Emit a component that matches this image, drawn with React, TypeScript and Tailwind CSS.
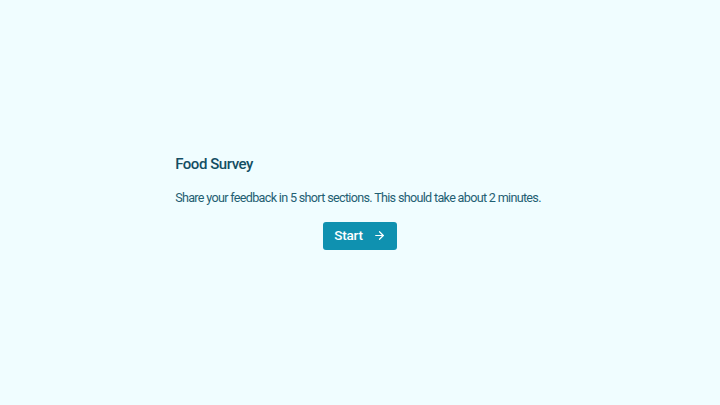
import React from 'react';
import { ArrowRight } from 'lucide-react';

export default function App() {
  return (
    <div
      className="w-full h-[405px] bg-[#f0fdff] flex items-center justify-center"
      style={{ fontFamily: 'Roboto, "Noto Sans", sans-serif' }}
    >
      <div className="flex flex-col pb-[2px]">
        <h1 className="text-[15px] font-medium text-[#134e63] leading-5 tracking-[-0.45px]">Food Survey</h1>
        <p className="mt-[14px] pr-[4px] text-[12.6px] text-[#1f5f73] leading-5 tracking-[-0.68px]">
          Share your feedback in 5 short sections. This should take about 2 minutes.
        </p>
        <div className="mt-[14px] flex justify-center">
          <button className="h-[28px] px-[11px] rounded-[3px] bg-[#0f91b0] text-white text-[13.5px] font-medium tracking-[-0.2px] flex items-center gap-[10px]">
            Start
            <ArrowRight size={13} strokeWidth={2.25} />
          </button>
        </div>
      </div>
    </div>
  );
}
